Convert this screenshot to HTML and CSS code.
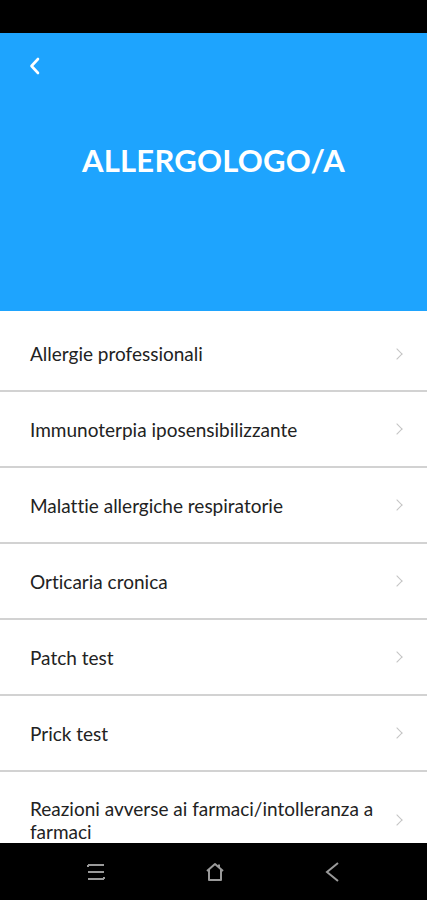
FILE: index.html
```html
<!DOCTYPE html>
<html lang="it">
<head>
    <meta charset="UTF-8">
    <meta name="viewport" content="width=device-width, initial-scale=1.0">
    <title>Allergologo/a</title>
    <link rel="stylesheet" href="styles.css">
</head>
<body>
    <div class="screen">
        <div class="status-bar"></div>

        <div class="header">
            <div class="back">
                <svg width="14" height="20" viewBox="0 0 14 20">
                    <path d="M10 3 L3.5 10 L10 17" fill="none" stroke="#fff" stroke-width="2.6" stroke-linecap="round" stroke-linejoin="round"/>
                </svg>
            </div>
            <h1 class="title">ALLERGOLOGO/A</h1>
        </div>

        <ul class="list">
            <li class="item first"><span>Allergie professionali</span><i class="chev"></i></li>
            <li class="item"><span>Immunoterpia iposensibilizzante</span><i class="chev"></i></li>
            <li class="item"><span>Malattie allergiche respiratorie</span><i class="chev"></i></li>
            <li class="item"><span>Orticaria cronica</span><i class="chev"></i></li>
            <li class="item"><span>Patch test</span><i class="chev"></i></li>
            <li class="item"><span>Prick test</span><i class="chev"></i></li>
            <li class="item tall"><span>Reazioni avverse ai farmaci/intolleranza a farmaci</span><i class="chev"></i></li>
        </ul>

        <div class="nav-bar">
            <svg width="20" height="20" viewBox="0 0 20 20">
                <g fill="none" stroke="#9a9a9a" stroke-width="2">
                    <path d="M2 3 H18"/>
                    <path d="M2 10 H18"/>
                    <path d="M2 17 H18"/>
                    <path d="M2 3 V5 M18 15 V17"/>
                </g>
            </svg>
            <svg width="22" height="22" viewBox="0 0 22 22">
                <path d="M3 10 L11 3 L19 10 M5 8.5 V19 H17 V8.5 M15 6 V3.5" fill="none" stroke="#9a9a9a" stroke-width="2" stroke-linejoin="round"/>
            </svg>
            <svg width="16" height="22" viewBox="0 0 16 22">
                <path d="M14 2 L3 11 L14 20" fill="none" stroke="#9a9a9a" stroke-width="2"/>
            </svg>
        </div>
    </div>
</body>
</html>
```

FILE: styles.css
```css
*{
    box-sizing: border-box;
}
body{
    margin: 0;
    background: #fff;
    font-family: Lato, "Open Sans", sans-serif;
    font-variant-ligatures: none;
}
.screen{
    width: 427px;
    height: 900px;
    display: flex;
    flex-direction: column;
    overflow: hidden;
}
.status-bar{
    height: 33px;
    background: #000;
    flex-shrink: 0;
}
.header{
    height: 278px;
    background: #1ea4fe;
    flex-shrink: 0;
    padding: 23px 0 0 28px;
}
.back{
    height: 20px;
}
.title{
    margin: 66px 28px 0 0;
    text-align: center;
    color: #fff;
    font-size: 31px;
    line-height: 37px;
    font-weight: 700;
    letter-spacing: 0.2px;
}
.list{
    list-style: none;
    margin: 0;
    padding: 0;
    flex: 1;
    overflow: hidden;
}
.item{
    height: 76px;
    display: flex;
    align-items: center;
    justify-content: space-between;
    padding: 0 26px 0 30px;
    border-bottom: 2px solid #d2d2d2;
    color: #222;
    font-size: 19px;
    line-height: 23px;
}
.item.first{
    height: 81px;
    padding-top: 6px;
}
.item.tall{
    height: 94px;
    padding-top: 2px;
    border-bottom: none;
}
.item span{
    max-width: 350px;
}
.chev{
    width: 8px;
    height: 8px;
    border-top: 1.5px solid #c4c4c4;
    border-right: 1.5px solid #c4c4c4;
    transform: rotate(45deg);
    flex-shrink: 0;
}
.nav-bar{
    height: 57px;
    background: #000;
    flex-shrink: 0;
    display: flex;
    align-items: center;
    gap: 98px;
    padding-left: 86px;
}
```
